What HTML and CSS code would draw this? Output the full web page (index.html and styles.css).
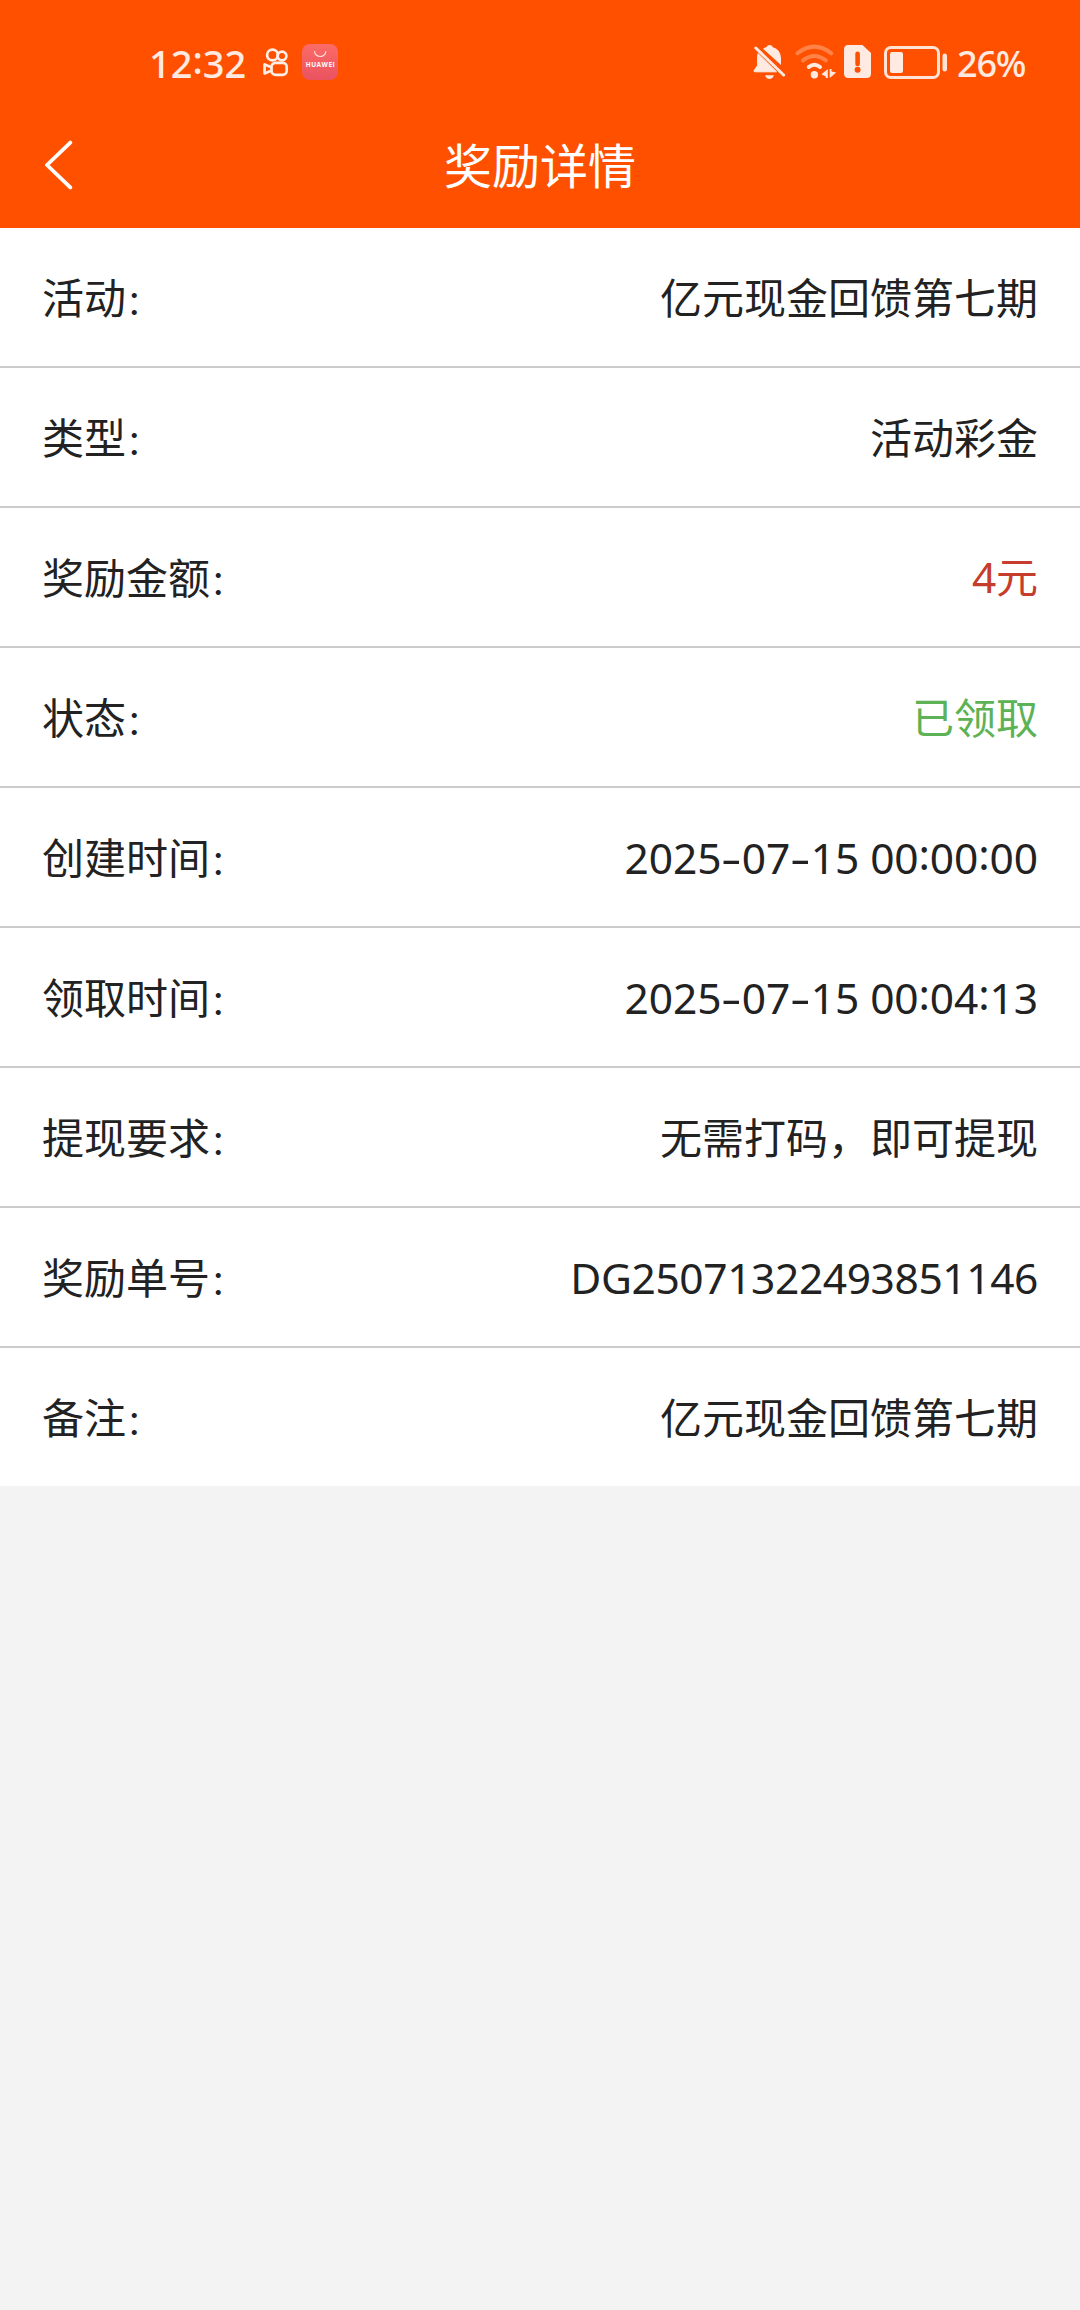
FILE: index.html
```html
<!DOCTYPE html>
<html lang="zh-CN">
<head>
<meta charset="utf-8">
<title>奖励详情</title>
<link rel="stylesheet" href="styles.css">
</head>
<body>
<header class="header">
  <div class="status">
    <div class="status-left">
      <span class="clock">12<span class="colon">:</span>32</span>
      <svg class="kwai" width="26" height="36" viewBox="263 44 26 36" fill="none" stroke="#ffefe6" stroke-width="2.7">
        <circle cx="272.5" cy="55" r="5.4"/>
        <circle cx="282" cy="56" r="4.4"/>
        <rect x="271.5" y="62.8" width="15.2" height="12" rx="4"/>
        <path d="M271.5 67.2 L264.6 64.5 V73.5 L271.5 70.6" stroke-linejoin="round"/>
      </svg>
      <svg class="huawei" width="36" height="36" viewBox="0 0 36 36">
        <defs><linearGradient id="hw" x1="0" y1="0" x2="0" y2="1"><stop offset="0" stop-color="#fb6c68"/><stop offset="1" stop-color="#ea5260"/></linearGradient></defs>
        <rect width="36" height="36" rx="8" fill="url(#hw)"/>
        <path d="M12.6 7.5 a5.6 5 0 0 0 11.2 0" fill="none" stroke="#ffe3e0" stroke-width="1.1" stroke-linecap="round"/>
        <text class="huawei-text" x="18.2" y="23.4" text-anchor="middle" textLength="29">HUAWEI</text>
      </svg>
    </div>
    <div class="status-right">
      <svg width="33" height="36" viewBox="753 44 33 36">
        <path d="M758 53.5 L776.5 71.8 H755 Q753.6 71.8 754.2 70.3 L757.6 65.5 V57 Z" fill="#ffeae1" stroke="#ffeae1" stroke-width="1"/>
        <path d="M763 48.8 Q765.5 47.2 767 46.8 L767.5 45.6 Q769.4 44.2 771.8 45.6 L772.6 46.9 Q780.8 49.5 781 58 V65 Z" fill="#ffeae1"/>
        <path d="M765 75.2 H774 Q772.8 78.9 769.5 78.9 Q766.2 78.9 765 75.2 Z" fill="#ffeae1"/>
        <path d="M755.8 48 L783.6 75" stroke="#ffeae1" stroke-width="3" stroke-linecap="round"/>
      </svg>
      <svg class="wifi" width="42" height="36" viewBox="795 44 42 36" fill="none" stroke-width="4" stroke-linecap="round">
        <path d="M797.5 53.3 Q814.3 40 831.2 53.3" stroke="#ff8248"/>
        <path d="M803 60.3 Q814.3 51.8 825.8 60.3" stroke="#ff8248"/>
        <path d="M808.8 67 Q814.4 62.5 820 67" stroke="#ffeae1"/>
        <circle cx="814.4" cy="74.7" r="3.7" fill="#ffeae1"/>
        <path d="M821.5 74.2 L827.8 69 V78 H825.8 V76.5 Z M836.2 72.5 L829.7 78 V69 H831.5 V71.5 Z" fill="#ffeae1"/>
      </svg>
      <svg class="sim" width="28" height="36" viewBox="843 44 28 36">
        <path d="M848 45 H862.5 L871 53 V73.5 Q871 78 866.5 78 H848.5 Q844 78 844 73.5 V49.5 Q844 45 848 45 Z" fill="#ffeae1"/>
        <path d="M857.6 53.8 V64" stroke="#ff5000" stroke-width="4.6" stroke-linecap="round"/>
        <circle cx="857.6" cy="69.8" r="3" fill="#ff5000"/>
      </svg>
      <svg class="battery" width="65" height="36" viewBox="883 44 65 36">
        <rect x="885.5" y="47.5" width="53" height="30" rx="5.5" fill="none" stroke="#ffe4d6" stroke-width="3"/>
        <rect x="890" y="52" width="13" height="21" rx="2" fill="#ffeae1"/>
        <rect x="942.5" y="53.5" width="4.5" height="18" rx="2.2" fill="#ffe4d6"/>
      </svg>
      <span class="percent">26%</span>
    </div>
  </div>
  <nav class="nav">
    <svg class="back" width="28" height="50" viewBox="0 0 28 50" fill="none" stroke="#fff" stroke-width="3.8" stroke-linecap="round" stroke-linejoin="round">
      <path d="M25.3 2.6 L2 25 L25.3 47.4"/>
    </svg>
    <h1 class="title">奖励详情</h1>
  </nav>
</header>
<main class="list">
  <div class="row"><span>活动<span class="label-colon">：</span></span><span>亿元现金回馈第七期</span></div>
  <div class="row"><span>类型<span class="label-colon">：</span></span><span>活动彩金</span></div>
  <div class="row"><span>奖励金额<span class="label-colon">：</span></span><span class="amount"><span class="num">4</span>元</span></div>
  <div class="row"><span>状态<span class="label-colon">：</span></span><span class="done">已领取</span></div>
  <div class="row"><span>创建时间<span class="label-colon">：</span></span><span class="num date">2025<span class="dash">-</span>07<span class="dash">-</span>15 00<span class="colon">:</span>00<span class="colon">:</span>00</span></div>
  <div class="row"><span>领取时间<span class="label-colon">：</span></span><span class="num date">2025<span class="dash">-</span>07<span class="dash">-</span>15 00<span class="colon">:</span>04<span class="colon">:</span>13</span></div>
  <div class="row"><span>提现要求<span class="label-colon">：</span></span><span>无需打码，即可提现</span></div>
  <div class="row"><span>奖励单号<span class="label-colon">：</span></span><span class="num order">DG25071322493851146</span></div>
  <div class="row"><span>备注<span class="label-colon">：</span></span><span>亿元现金回馈第七期</span></div>
</main>
</body>
</html>
```
FILE: styles.css
```css
* { box-sizing: border-box; }
body {
  margin: 0;
  min-height: 2310px;
  background: #f3f3f3;
  color: #222;
  font-family: "Noto Sans CJK SC", sans-serif;
  font-size: 42px;
}
.header {
  height: 228px;
  background: #ff5000;
  color: #fff;
}
.status {
  display: flex;
  justify-content: space-between;
  height: 124px;
  padding: 0 54px 0 149px;
  color: #ffeae1;
  font-family: "Noto Sans", sans-serif;
}
.status-left, .status-right {
  display: flex;
  align-items: center;
}
.status svg { flex: none; }
.clock {
  width: 114px;
  font-size: 38px;
  font-weight: 500;
  line-height: 52px;
  padding-top: 1px;
  white-space: nowrap;
}
.kwai { margin-right: 13px; }
.huawei-text {
  font-family: "Open Sans", sans-serif;
  font-size: 6.5px;
  font-weight: 700;
  fill: #fff;
}
.wifi { margin-left: 9px; }
.sim { margin-left: 6px; }
.battery { margin-left: 12px; }
.percent {
  width: 69px;
  margin-left: 9px;
  padding-top: 4px;
  font-size: 36px;
  font-weight: 500;
  line-height: 50px;
  letter-spacing: -1.2px;
  white-space: nowrap;
}
.nav {
  display: grid;
  grid-template-columns: 1fr auto 1fr;
  align-items: center;
  height: 84px;
  padding: 0 45px 2px;
}
.title {
  margin: 0;
  padding-bottom: 4px;
  font-size: 48px;
  font-weight: 400;
  line-height: 72px;
}
.list { background: #fff; }
.row {
  display: flex;
  justify-content: space-between;
  align-items: center;
  height: 140px;
  padding: 0 42px 2px;
  border-bottom: 2px solid #ccc;
  line-height: 60px;
}
.row:last-child {
  height: 138px;
  border-bottom: 0;
}
.label-colon {
  font-size: 33px;
  line-height: 1;
}
.num {
  font-family: "Noto Sans", sans-serif;
  font-size: 42.5px;
  letter-spacing: -0.3px;
}
.date {
  padding-top: 4px;
  letter-spacing: -0.1px;
}
.order {
  padding-top: 4px;
  letter-spacing: -0.4px;
}
.colon {
  display: inline-block;
  line-height: 1;
  vertical-align: 0.09em;
}
.dash {
  display: inline-block;
  width: 20.5px;
  line-height: 1;
  text-align: center;
  transform: scaleX(1.5);
}
.amount { color: #c63d2b; }
.done { color: #5cb254; }
```
